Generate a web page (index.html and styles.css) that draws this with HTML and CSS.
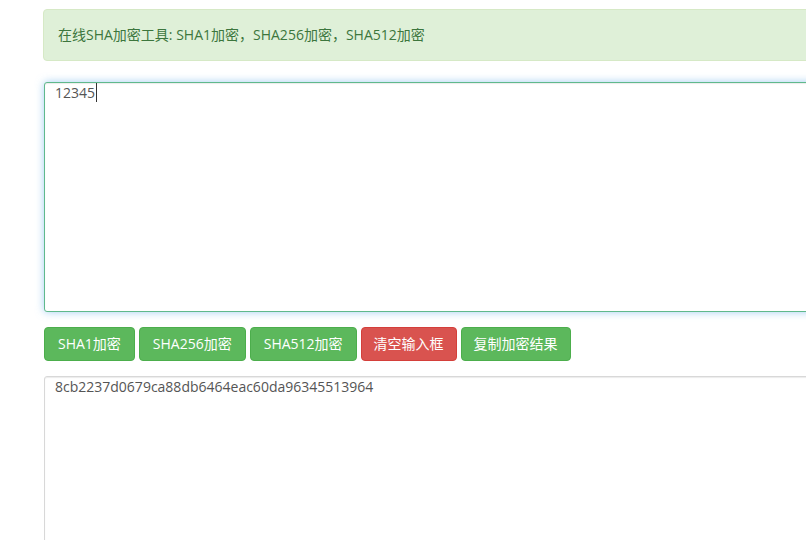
FILE: index.html
```html
<!DOCTYPE html>
<html lang="zh-CN">
<head>
<meta charset="utf-8">
<title>在线SHA加密工具</title>
<link rel="stylesheet" href="styles.css">
</head>
<body>
<main class="tool">
  <div class="alert">在线SHA加密工具: SHA1加密，SHA256加密，SHA512加密</div>
  <form class="panel">
    <div class="field">
      <textarea class="box box-active" aria-label="输入" spellcheck="false">12345</textarea>
      <span class="caret"></span>
    </div>
    <div class="actions">
      <button type="button" class="btn btn-hash">SHA1加密</button>
      <button type="button" class="btn btn-hash">SHA256加密</button>
      <button type="button" class="btn btn-hash">SHA512加密</button>
      <button type="button" class="btn btn-danger">清空输入框</button>
      <button type="button" class="btn">复制加密结果</button>
    </div>
    <textarea class="box" aria-label="加密结果" spellcheck="false">8cb2237d0679ca88db6464eac60da96345513964</textarea>
  </form>
</main>
</body>
</html>
```
FILE: styles.css
```css
* { box-sizing: border-box; }

body {
  margin: 0;
  overflow: hidden;
  background: #fff;
  font: 14px/20px "Open Sans", "Noto Sans CJK SC", sans-serif;
}

.tool {
  margin: 9px -12px 0 43px;
}

.alert {
  padding: 15px 14px;
  border: 1px solid #d6e9c6;
  border-radius: 4px;
  background: #dff0d8;
  color: #3c763d;
}

.panel {
  display: flex;
  flex-direction: column;
  gap: 15px;
  margin: 21px 0 0 1px;
}

.field {
  position: relative;
  display: flex;
}

.box {
  display: block;
  width: 100%;
  height: 230px;
  padding: 0 10px;
  border: 1px solid #d8d8d8;
  border-radius: 3px;
  outline: 0;
  resize: none;
  overflow: hidden;
  background: #fff;
  box-shadow: inset 0 1px 1px rgba(0, 0, 0, 0.08);
  color: #555;
  font: inherit;
}

.box-active {
  border-color: #5fb98c;
  box-shadow: inset 0 1px 1px rgba(0, 0, 0, 0.08), 0 0 8px rgba(102, 175, 233, 0.6);
}

.caret {
  position: absolute;
  top: 1px;
  left: 52px;
  width: 1px;
  height: 19px;
  background: #333;
}

.actions {
  display: flex;
  gap: 4px;
}

.btn {
  height: 34px;
  padding: 0 12px;
  border: 1px solid #4cae4c;
  border-radius: 4px;
  background: #5cb85c;
  color: #fff;
  font: inherit;
  white-space: nowrap;
}

.btn-hash {
  padding: 0 13px;
}

.btn-danger {
  border-color: #d43f3a;
  background: #d9534f;
}
```
